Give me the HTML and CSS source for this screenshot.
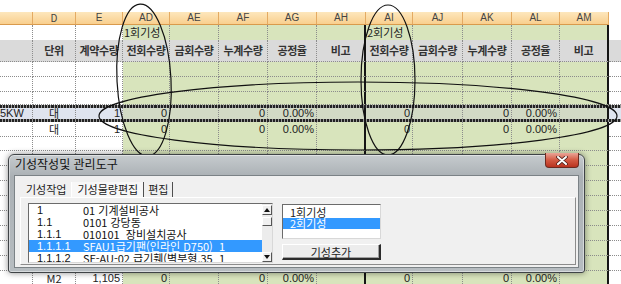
FILE: index.html
```html
<!DOCTYPE html>
<html lang="ko">
<head>
  <meta charset="UTF-8" />
  <title>기성작성및 관리도구</title>
  <link rel="stylesheet" href="styles.css">
</head>
<body>
  <div class="screen">

    <div class="sheet">
      <div class="row cols">
        <span></span><span>D</span><span>E</span><span>AD</span><span>AE</span><span>AF</span><span>AG</span><span>AH</span><span>AI</span><span>AJ</span><span>AK</span><span>AL</span><span>AM</span><span></span>
      </div>
      <div class="row group">
        <span></span><span></span><span></span><span>1회기성</span><span></span><span></span><span></span><span></span><span>2회기성</span><span></span><span></span><span></span><span></span><span></span>
      </div>
      <div class="row head">
        <span></span><span>단위</span><span>계약수량</span><span>전회수량</span><span>금회수량</span><span>누계수량</span><span>공정율</span><span>비고</span><span>전회수량</span><span>금회수량</span><span>누계수량</span><span>공정율</span><span>비고</span><span></span>
      </div>
      <div class="row"><span></span><span></span><span></span><span></span><span></span><span></span><span></span><span></span><span></span><span></span><span></span><span></span><span></span><span></span></div>
      <div class="row"><span></span><span></span><span></span><span></span><span></span><span></span><span></span><span></span><span></span><span></span><span></span><span></span><span></span><span></span></div>
      <div class="row short"><span></span><span></span><span></span><span></span><span></span><span></span><span></span><span></span><span></span><span></span><span></span><span></span><span></span><span></span></div>
      <div class="row sel">
        <span class="cut">5KW</span><span>대</span><span>1</span><span>0</span><span></span><span>0</span><span>0.00%</span><span></span><span>0</span><span></span><span>0</span><span>0.00%</span><span></span><span></span>
      </div>
      <div class="row after">
        <span></span><span>대</span><span>1</span><span>0</span><span></span><span>0</span><span>0.00%</span><span></span><span>0</span><span></span><span>0</span><span>0.00%</span><span></span><span></span>
      </div>
      <div class="row"><span></span><span></span><span></span><span></span><span></span><span></span><span></span><span></span><span></span><span></span><span></span><span></span><span></span><span></span></div>
      <div class="row"><span></span><span></span><span></span><span></span><span></span><span></span><span></span><span></span><span></span><span></span><span></span><span></span><span></span><span></span></div>
      <div class="row"><span></span><span></span><span></span><span></span><span></span><span></span><span></span><span></span><span></span><span></span><span></span><span></span><span></span><span></span></div>
      <div class="row"><span></span><span></span><span></span><span></span><span></span><span></span><span></span><span></span><span></span><span></span><span></span><span></span><span></span><span></span></div>
      <div class="row"><span></span><span></span><span></span><span></span><span></span><span></span><span></span><span></span><span></span><span></span><span></span><span></span><span></span><span></span></div>
      <div class="row"><span></span><span></span><span></span><span></span><span></span><span></span><span></span><span></span><span></span><span></span><span></span><span></span><span></span><span></span></div>
      <div class="row"><span></span><span></span><span></span><span></span><span></span><span></span><span></span><span></span><span></span><span></span><span></span><span></span><span></span><span></span></div>
      <div class="row"><span></span><span></span><span></span><span></span><span></span><span></span><span></span><span></span><span></span><span></span><span></span><span></span><span></span><span></span></div>
      <div class="row"><span></span><span></span><span></span><span></span><span></span><span></span><span></span><span></span><span></span><span></span><span></span><span></span><span></span><span></span></div>
      <div class="row">
        <span></span><span class="mid">M2</span><span>1,105</span><span>0</span><span></span><span>0</span><span>0.00%</span><span></span><span>0</span><span></span><span>0</span><span>0.00%</span><span></span><span></span>
      </div>
    </div>

    <!-- hand drawn marks over the sheet -->
    <svg class="marks" width="621" height="284" viewBox="0 0 621 284">
      <ellipse cx="144" cy="80" rx="27" ry="76" transform="rotate(-3 144 80)" />
      <ellipse cx="388" cy="80" rx="27" ry="75" />
      <ellipse cx="358" cy="116" rx="259" ry="34" />
    </svg>

    <div class="dialog">
      <div class="titlebar">
        <div class="title">기성작성및 관리도구</div>
        <div class="close">
          <svg width="12" height="9" viewBox="0 0 12 9">
            <path d="M2 1 L10 8 M10 1 L2 8" stroke="#4a1f18" stroke-width="3.6" stroke-linecap="round" />
            <path d="M2 1 L10 8 M10 1 L2 8" stroke="#fff" stroke-width="2" stroke-linecap="round" />
          </svg>
        </div>
      </div>
      <div class="client">
        <div class="tabs">
          <div class="tab">기성작업</div>
          <div class="tab active">기성물량편집</div>
          <div class="tab">편집</div>
        </div>
        <div class="panel">
          <div class="listbox items">
            <div class="rows">
              <div class="item"><span>1</span><span>01 기계설비공사</span></div>
              <div class="item"><span>1.1</span><span>0101 강당동</span></div>
              <div class="item"><span>1.1.1</span><span>010101  장비설치공사</span></div>
              <div class="item selected"><span>1.1.1.1</span><span>SFAU1급기팬(인라인 D750)  1</span></div>
              <div class="item"><span>1.1.1.2</span><span>SF-AU-02 급기휀(벽부형,35  1</span></div>
            </div>
            <div class="vscroll">
              <div class="arrow">
                <svg width="6" height="4" viewBox="0 0 6 4"><path d="M0 4 L3 0 L6 4 Z" fill="#111" /></svg>
              </div>
              <div class="thumb"></div>
              <div class="track"></div>
              <div class="arrow">
                <svg width="6" height="4" viewBox="0 0 6 4"><path d="M0 0 L6 0 L3 4 Z" fill="#111" /></svg>
              </div>
            </div>
          </div>
          <div class="side">
            <div class="listbox rounds">
              <div class="round">1회기성</div>
              <div class="round selected">2회기성</div>
            </div>
            <button class="add">기성추가</button>
          </div>
        </div>
      </div>
    </div>

  </div>
</body>
</html>
```

FILE: styles.css
```css
body {
  margin: 0;
  font-family: "Noto Sans CJK KR", sans-serif;
  background-color: #fff;
  color: #222;
}

.screen {
  position: relative;
  width: 621px;
  height: 284px;
  overflow: hidden;
}

/* Spreadsheet */
.sheet {
  padding-top: 12px;
}

.row {
  display: grid;
  grid-template-columns: 33px 43px 47px 47px 49px 49px 49px 49px 47px 50px 49px 48px 49px 12px;
  height: 15px;
  font-size: 11px;
}

.row > span {
  box-sizing: border-box;
  border-right: 1px dotted #8c8c8c;
  border-bottom: 1px dotted #8c8c8c;
  padding: 0 2px;
  line-height: 14px;
  white-space: nowrap;
  text-align: right;
  font-family: "Liberation Sans", "Noto Sans CJK KR", sans-serif;
}

.row > span:nth-child(2),
.row > span.mid {
  text-align: center;
  font-family: "Noto Sans CJK KR", sans-serif;
}

.row > span:nth-child(n+4):nth-child(-n+13) {
  background-color: #d8e4bc;
}

.row > span:nth-child(14) {
  border-right: none;
}

.row:not(.cols) > span:nth-child(8),
.row:not(.cols) > span:nth-child(13) {
  border-right: 2px solid #151515;
}

.row.cols {
  height: 13px;
}

.row.cols > span {
  background: linear-gradient(#fde7bd, #f9cf8e);
  border-right: 1px solid #e4aa62;
  border-bottom: 1px solid #d99a4c;
  text-align: center;
  line-height: 12px;
  font-size: 10px;
  color: #444;
}

.row.cols > span:nth-child(14) {
  background: #fff;
  border: none;
}

.row.group > span {
  text-align: left;
  padding: 0 1px;
  font-family: "Noto Sans CJK KR", sans-serif;
  line-height: 15px;
}

.row.head {
  height: 22px;
}

.row.head > span,
.row.head > span:nth-child(n+4):nth-child(-n+13) {
  background-color: #dadada;
  text-align: center;
  padding: 0;
  line-height: 21px;
  font-weight: bold;
  letter-spacing: -0.4px;
  color: #333;
  font-family: "Noto Sans CJK KR", sans-serif;
}

.row.short {
  height: 13px;
}

.row.after {
  height: 14px;
}

.row.sel {
  box-sizing: border-box;
  height: 17px;
  border-top: 3px solid #333;
  border-bottom: 3px solid #333;
  border-image: repeating-linear-gradient(90deg, #222 0 2px, #9a9a9a 2px 3px) 3;
}

.row.sel > span {
  border-bottom: none;
  line-height: 11px;
  background-color: #dfe4ee;
}

.row.sel > span:nth-child(n+4):nth-child(-n+13) {
  background-color: #d2dac5;
}

.row.sel > span.cut {
  text-align: left;
  padding: 0;
}

/* Pen marks */
.marks {
  position: absolute;
  top: 0;
  left: 0;
  pointer-events: none;
}

.marks ellipse {
  fill: none;
  stroke: #111;
  stroke-width: 1.2;
}

/* Dialog */
.dialog {
  position: absolute;
  left: 8px;
  top: 154px;
  width: 577px;
  height: 119px;
  box-sizing: border-box;
  border: 1px solid #3f4346;
  border-radius: 6px 6px 3px 3px;
  background: linear-gradient(#c6cbce, #aab0b4 22px, #b7bdc1);
  box-shadow: 0 0 6px rgba(0, 0, 0, 0.45), inset 0 0 0 1px rgba(255, 255, 255, 0.45);
  padding: 0 5px 4px 5px;
  display: flex;
  flex-direction: column;
}

.titlebar {
  height: 20px;
  display: flex;
  justify-content: space-between;
  align-items: flex-start;
}

.title {
  margin: 2px 0 0 1px;
  font-size: 12px;
  line-height: 14px;
  color: #111;
}

.close {
  width: 34px;
  height: 15px;
  margin-top: -2px;
  box-sizing: border-box;
  border: 1px solid #6d2a20;
  border-top: none;
  border-radius: 0 0 4px 4px;
  background: linear-gradient(#eaa597, #d45a43 50%, #b9331f);
  display: flex;
  align-items: center;
  justify-content: center;
}

.client {
  flex: 1;
  display: flex;
  flex-direction: column;
  background-color: #f0f0f0;
  border: 1px solid #7b8286;
}

.tabs {
  display: flex;
  height: 21px;
  box-sizing: border-box;
  padding: 6px 0 0 7px;
}

.tab {
  height: 15px;
  line-height: 15px;
  padding: 0 4px;
  font-size: 11px;
  color: #222;
  border-right: 1px solid #4f4f4f;
}

.tab:first-child {
  border-right-color: transparent;
}

.tab.active {
  background-color: #f7f7f7;
  border-left: 1px solid #fff;
  padding: 0 5px;
}

.panel {
  flex: 1;
  margin: 0 2px 2px 5px;
  border-top: 1px solid #fff;
  border-left: 1px solid #fff;
  border-right: 1px solid #8c8c8c;
  border-bottom: 1px solid #8c8c8c;
  padding: 5px 0 0 7px;
  display: flex;
  gap: 9px;
  align-items: flex-start;
}

.listbox {
  box-sizing: border-box;
  background-color: #fff;
  border-top: 1px solid #6b6b6b;
  border-left: 1px solid #6b6b6b;
  border-right: 1px solid #d8d8d8;
  border-bottom: 1px solid #d8d8d8;
  font-size: 11px;
}

.listbox.items {
  width: 245px;
  height: 60px;
  display: flex;
}

.rows {
  flex: 1;
  overflow: hidden;
}

.item {
  display: grid;
  grid-template-columns: 54px 1fr;
  height: 12px;
  line-height: 12px;
  white-space: pre;
  color: #111;
}

.item span:first-child {
  padding-left: 8px;
  font-family: "Liberation Sans", sans-serif;
}

.selected {
  background-color: #3399ff;
  color: #fff;
}

.vscroll {
  width: 10px;
  display: flex;
  flex-direction: column;
  background-color: #ececec;
}

.arrow,
.thumb {
  box-sizing: border-box;
  width: 10px;
  height: 10px;
  background-color: #f0f0f0;
  border-top: 1px solid #fff;
  border-left: 1px solid #fff;
  border-right: 1px solid #555;
  border-bottom: 1px solid #555;
  display: flex;
  align-items: center;
  justify-content: center;
}

.arrow {
  margin-top: 1px;
}

.thumb {
  height: 9px;
  margin-top: 2px;
}

.track {
  flex: 1;
}

.side {
  width: 99px;
  display: flex;
  flex-direction: column;
  gap: 5px;
  padding-top: 1px;
}

.listbox.rounds {
  height: 35px;
  padding-top: 2px;
}

.round {
  height: 11px;
  line-height: 11px;
  padding-left: 7px;
}

.add {
  height: 16px;
  padding: 0;
  line-height: 12px;
  font-family: "Noto Sans CJK KR", sans-serif;
  font-size: 11px;
  color: #222;
  background-color: #ececec;
  border-top: 1px solid #fff;
  border-left: 1px solid #fff;
  border-right: 2px solid #2b2b2b;
  border-bottom: 2px solid #2b2b2b;
  box-shadow: inset -1px -1px 0 #a0a0a0;
}
```
